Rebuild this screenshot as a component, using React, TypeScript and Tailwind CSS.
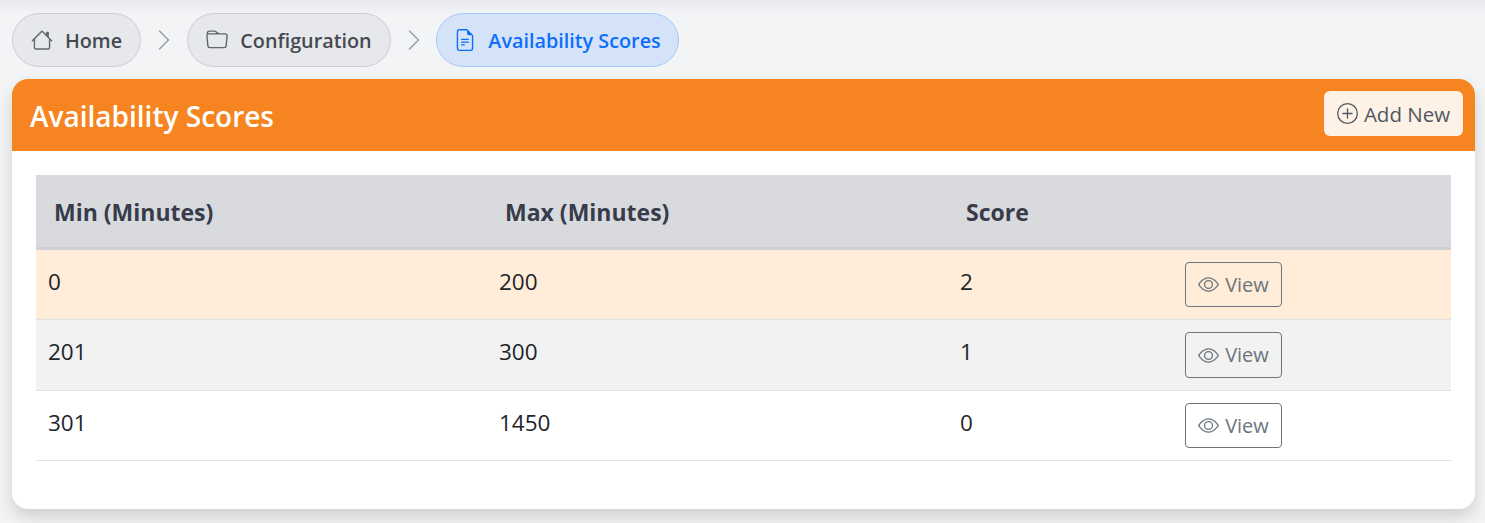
import { BsChevronRight, BsEye, BsFileEarmarkText, BsFolder, BsHouse, BsPlusCircle } from 'react-icons/bs';

const rows = [
  { min: '0', max: '200', score: '2', rowClass: 'bg-[#ffecd9]', height: 'h-[70px]', buttonHeight: 'h-[45px]' },
  { min: '201', max: '300', score: '1', rowClass: 'bg-[#f2f2f2]', height: 'h-[71px]', buttonHeight: 'h-[46px]' },
  { min: '301', max: '1450', score: '0', rowClass: 'bg-white', height: 'h-[70px]', buttonHeight: 'h-[45px]' },
];

function Crumb({ icon, label, active, width }: { icon: React.ReactNode; label: string; active?: boolean; width: string }) {
  return (
    <div
      className={`flex h-[54px] shrink-0 items-center justify-center gap-[12px] rounded-[27px] border text-[19.8px] font-semibold ${width} ${
        active
          ? 'border-[#a6c8f7] bg-[#d5e3f8] text-[#0d6efd]'
          : 'border-[#ccced1] bg-[#e7e8eb] text-[#454a52]'
      }`}
    >
      <span className={`text-[22px] ${active ? 'text-[#0d6efd]' : 'text-[#5f656d]'}`}>{icon}</span>
      <span className="pt-[2px]">{label}</span>
    </div>
  );
}

function Separator({ width }: { width: string }) {
  return (
    <div className={`flex shrink-0 justify-center ${width}`}>
      <BsChevronRight className="text-[24px] text-[#9a9fa6]" />
    </div>
  );
}

export default function App() {
  return (
    <div className="h-[523px] overflow-hidden bg-gradient-to-b from-[#e6e8ec] via-[#f3f4f6] via-[14px] to-[#f3f4f6] pl-3 pr-[10px] pt-[13px] font-['Open_Sans','Noto_Sans',sans-serif]">
      {/* Breadcrumb */}
      <div className="flex items-center">
        <Crumb icon={<BsHouse />} label="Home" width="w-[129px]" />
        <Separator width="w-[46px]" />
        <Crumb icon={<BsFolder />} label="Configuration" width="w-[204px]" />
        <Separator width="w-[45px]" />
        <Crumb icon={<BsFileEarmarkText />} label="Availability Scores" active width="w-[243px]" />
      </div>

      {/* Card */}
      <div className="mt-3 h-[430px] overflow-hidden rounded-2xl bg-white shadow-[0_8px_16px_rgba(0,0,0,0.15)]">
        <div className="flex h-[72px] items-start justify-between bg-[#f68420] pl-[18px] pr-3 pt-3">
          <h1 className="mt-[5px] text-[28px] font-semibold leading-[40px] text-white">Availability Scores</h1>
          <button className="flex h-[45px] w-[139px] items-center justify-center gap-[6px] rounded-md bg-[#fef2e6] pt-[2px] text-[20.5px] text-[#4f5862]">
            <BsPlusCircle className="-mt-[2px] text-[21px]" />
            Add New
          </button>
        </div>

        <div className="px-6 pt-6">
          {/* Table header */}
          <div className="grid h-[75px] grid-cols-[451px_461px_219px_1fr] items-center border-b-[3px] border-[#d0d1d5] bg-[#d9dade] pl-[18px] pt-[2px] text-[23px] font-bold text-[#373c4a]">
            <div>Min (Minutes)</div>
            <div>Max (Minutes)</div>
            <div>Score</div>
            <div />
          </div>

          {rows.map((row) => (
            <div
              key={row.min}
              className={`grid grid-cols-[451px_461px_225px_1fr] items-start border-b border-[#dfe1e6] pl-3 pt-3 text-[22.5px] leading-[40px] text-[#212529] ${row.rowClass} ${row.height}`}
            >
              <div>{row.min}</div>
              <div>{row.max}</div>
              <div>{row.score}</div>
              <div>
                <button className={`flex w-[97px] items-center justify-center gap-[6px] rounded border border-[#6c757d] text-[20px] text-[#6c757d] ${row.buttonHeight}`}>
                  <BsEye className="text-[21px]" />
                  View
                </button>
              </div>
            </div>
          ))}
        </div>
      </div>
    </div>
  );
}
